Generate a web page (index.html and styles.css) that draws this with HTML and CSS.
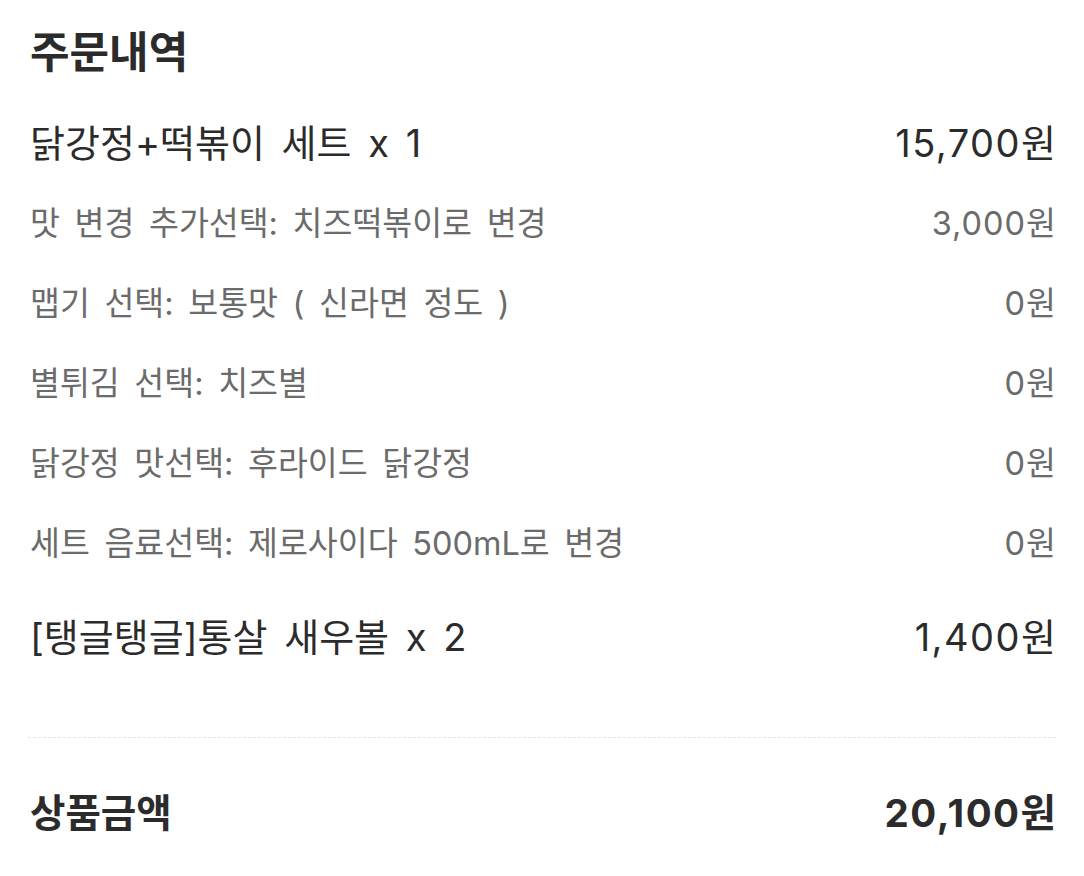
FILE: index.html
```html
<!DOCTYPE html>
<html lang="ko">
<head>
<meta charset="utf-8">
<title>주문내역</title>
<link rel="stylesheet" href="styles.css">
</head>
<body>
<section class="order">
  <h1 class="title">주문내역</h1>
  <div class="row main"><span class="name">닭강정+떡볶이 세트 x 1</span><span class="price">15,700원</span></div>
  <div class="row sub"><span class="name">맛 변경 추가선택: 치즈떡볶이로 변경</span><span class="price">3,000원</span></div>
  <div class="row sub"><span class="name">맵기 선택: 보통맛 ( 신라면 정도 )</span><span class="price">0원</span></div>
  <div class="row sub"><span class="name">별튀김 선택: 치즈별</span><span class="price">0원</span></div>
  <div class="row sub"><span class="name">닭강정 맛선택: 후라이드 닭강정</span><span class="price">0원</span></div>
  <div class="row sub"><span class="name">세트 음료선택: 제로사이다 500mL로 변경</span><span class="price">0원</span></div>
  <div class="row main second"><span class="name">[탱글탱글]통살 새우볼 x 2</span><span class="price">1,400원</span></div>
  <hr class="divider">
  <div class="row total"><span class="name">상품금액</span><span class="price">20,100원</span></div>
</section>
</body>
</html>
```
FILE: styles.css
```css
html, body {
  margin: 0;
  padding: 0;
  background: #ffffff;
}
body {
  font-family: "Inter", "Noto Sans CJK KR", "Noto Sans", sans-serif;
  color: #2b2b2b;
}
.order {
  padding: 24px 28px 0 30px;
}
.title {
  margin: 0;
  height: 56px;
  line-height: 56px;
  font-size: 43px;
  font-weight: 700;
  color: #2b2b2b;
}
.row {
  display: flex;
  justify-content: space-between;
  align-items: center;
  height: 80px;
  white-space: nowrap;
}
.main {
  font-size: 38px;
  color: #2b2b2b;
}
.main .name {
  word-spacing: 6px;
}
.main .price,
.total .price {
  letter-spacing: 1.5px;
  margin-right: -1.5px;
}
.title + .main {
  margin-top: 20px;
}
.sub {
  font-size: 32.5px;
  color: #6b6b6b;
}
.sub .name {
  word-spacing: 5.5px;
}
.sub .price {
  letter-spacing: 1px;
  margin-right: -1px;
}
.second {
  height: 108px;
}
.divider {
  margin: 49px 0 0 -2px;
  border: 0;
  border-top: 1px dashed #e4e4e4;
  height: 0;
}
.total {
  margin-top: 32px;
  height: 80px;
  font-size: 38.5px;
  font-weight: 700;
  color: #2b2b2b;
}
```
